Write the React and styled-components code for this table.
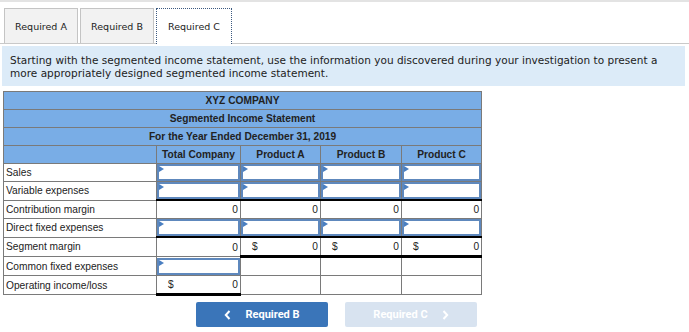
import React from "react";
import styled, { createGlobalStyle, css } from "styled-components";

const GlobalStyle = createGlobalStyle`
  html, body {
    margin: 0;
    padding: 0;
    background: #ffffff;
  }
  body {
    font-family: "Liberation Sans", Arial, sans-serif;
  }
`;

const Page = styled.div`
  width: 689px;
  height: 332px;
  overflow: hidden;
  border-top: 2px solid #e3e3e3;
  box-sizing: border-box;
`;

const TabBar = styled.div`
  display: flex;
  gap: 2px;
  padding: 6px 0 0 4px;
  border-bottom: 1px solid #c9c9c9;
  height: 42px;
  box-sizing: border-box;
`;

const Tab = styled.div`
  width: 74px;
  height: 35px;
  box-sizing: border-box;
  display: flex;
  align-items: center;
  justify-content: center;
  font-family: "DejaVu Sans", Verdana, sans-serif;
  font-size: 9.5px;
  color: #222;
  background: #f2f2f2;
  border: 1px solid #c4c4c4;
  border-bottom: none;
  ${(p) =>
    p.$active &&
    css`
      background: #ffffff;
      border: 1px dotted #3c5a80;
      border-bottom: none;
      height: 36px;
      margin-bottom: -1px;
      width: 76px;
    `}
`;

const Instructions = styled.p`
  margin: 2px 4px 0 2px;
  padding: 8px 8px 6px 8px;
  background: #dcebf8;
  font-family: "DejaVu Sans", Verdana, sans-serif;
  font-size: 10.5px;
  letter-spacing: 0.02px;
  line-height: 13px;
  color: #222;
`;

const Sheet = styled.table`
  margin: 5px 0 0 3px;
  border-collapse: collapse;
  table-layout: fixed;
  width: 478px;
  font-size: 10.2px;
  color: #222;
`;

const TitleCell = styled.th`
  background: #79ade6;
  border: 1.5px solid #7a7a7a;
  height: 17px;
  padding: 0;
  font-weight: bold;
  text-align: center;
`;

const ColHead = styled(TitleCell)`
  border-bottom: none;
`;

const BlankHead = styled.th`
  background: #79ade6;
  border-left: 1.5px solid #7a7a7a;
  padding: 0;
`;

const LabelCell = styled.td`
  border: 1.5px solid #7a7a7a;
  height: 17px;
  padding: 0 0 0 2px;
  white-space: nowrap;
`;

const ValueCell = styled.td`
  border: 1.5px solid #7a7a7a;
  height: 17px;
  padding: 0 2px 0 0;
  text-align: right;
  ${(p) => p.$topRule && css`border-top: 2px solid #000;`}
  ${(p) => p.$bottomRule && css`border-bottom: 3px solid #000;`}
`;

const Dollar = styled.span`
  float: left;
  margin-left: 11px;
`;

const InputCell = styled.td`
  border: 1.5px solid #7a7a7a;
  padding: 0;
  height: 17px;
`;

const InputBox = styled.div`
  height: 17px;
  box-sizing: border-box;
  border: 2px solid #5e88bd;
  background: #fff;
  position: relative;

  &::before {
    content: "";
    position: absolute;
    left: 0;
    top: 0;
    border-top: 3px solid transparent;
    border-bottom: 3px solid transparent;
    border-left: 5px solid #4a7fc1;
  }
`;

const NavRow = styled.div`
  display: flex;
  gap: 17px;
  margin: 6px 0 0 196px;
`;

const NavButton = styled.div`
  width: 132px;
  height: 25px;
  border-radius: 2px;
  display: flex;
  align-items: center;
  justify-content: center;
  gap: 14px;
  font-family: Roboto, "Liberation Sans", sans-serif;
  font-size: 11px;
  font-weight: bold;
  color: #fff;
  background: ${(p) => (p.$disabled ? "#d8e3f0" : "#3a75b9")};
`;

const Chevron = ({ dir }) => (
  <svg width="7" height="10" viewBox="0 0 7 10">
    <path
      d={dir === "left" ? "M5.5 1 L1.8 5 L5.5 9" : "M1.5 1 L5.2 5 L1.5 9"}
      fill="none"
      stroke="#fff"
      strokeWidth="2"
    />
  </svg>
);

const Input = () => (
  <InputCell>
    <InputBox />
  </InputCell>
);

const rows = [
  { label: "Sales", kind: "input" },
  { label: "Variable expenses", kind: "input" },
  { label: "Contribution margin", kind: "total" },
  { label: "Direct fixed expenses", kind: "input" },
  { label: "Segment margin", kind: "segment" },
  { label: "Common fixed expenses", kind: "common" },
  { label: "Operating income/loss", kind: "operating" },
];

const renderCells = (kind) => {
  const four = [0, 1, 2, 3];
  if (kind === "input") return four.map((i) => <Input key={i} />);
  if (kind === "total")
    return four.map((i) => (
      <ValueCell key={i} $topRule>
        0
      </ValueCell>
    ));
  if (kind === "segment")
    return four.map((i) => (
      <ValueCell key={i} $topRule $bottomRule={i > 0}>
        {i > 0 && <Dollar>$</Dollar>}0
      </ValueCell>
    ));
  if (kind === "common")
    return [<Input key="t" />, ...[1, 2, 3].map((i) => <ValueCell key={i} />)];
  return [
    <ValueCell key="t" $bottomRule>
      <Dollar>$</Dollar>0
    </ValueCell>,
    ...[1, 2, 3].map((i) => <ValueCell key={i} />),
  ];
};

export default function App() {
  return (
    <Page>
      <GlobalStyle />
      <TabBar>
        <Tab>Required A</Tab>
        <Tab>Required B</Tab>
        <Tab $active>Required C</Tab>
      </TabBar>
      <Instructions>
        Starting with the segmented income statement, use the information you
        discovered during your investigation to present a more appropriately
        designed segmented income statement.
      </Instructions>
      <Sheet>
        <colgroup>
          <col style={{ width: 153 }} />
          <col style={{ width: 84 }} />
          <col style={{ width: 80 }} />
          <col style={{ width: 81 }} />
          <col style={{ width: 80 }} />
        </colgroup>
        <thead>
          <tr>
            <TitleCell colSpan={5}>XYZ COMPANY</TitleCell>
          </tr>
          <tr>
            <TitleCell colSpan={5}>Segmented Income Statement</TitleCell>
          </tr>
          <tr>
            <TitleCell colSpan={5}>For the Year Ended December 31, 2019</TitleCell>
          </tr>
          <tr>
            <BlankHead />
            <ColHead>Total Company</ColHead>
            <ColHead>Product A</ColHead>
            <ColHead>Product B</ColHead>
            <ColHead>Product C</ColHead>
          </tr>
        </thead>
        <tbody>
          {rows.map((r) => (
            <tr key={r.label}>
              <LabelCell>{r.label}</LabelCell>
              {renderCells(r.kind)}
            </tr>
          ))}
        </tbody>
      </Sheet>
      <NavRow>
        <NavButton>
          <Chevron dir="left" />
          Required B
        </NavButton>
        <NavButton $disabled>
          Required C
          <Chevron dir="right" />
        </NavButton>
      </NavRow>
    </Page>
  );
}
